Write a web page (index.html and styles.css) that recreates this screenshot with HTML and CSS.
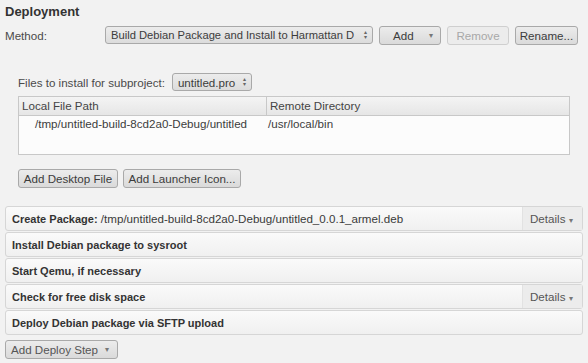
FILE: index.html
```html
<!DOCTYPE html>
<html lang="en">
<head>
    <meta charset="UTF-8">
    <title>Deployment</title>
    <link rel="stylesheet" href="styles.css">
</head>
<body>
    <div class="page">
        <h1 class="title">Deployment</h1>

        <div class="method-row">
            <span class="label">Method:</span>
            <div class="combo combo-method">
                <span class="combo-text">Build Debian Package and Install to Harmattan D</span>
                <span class="spin">&#x25B4;<br>&#x25BE;</span>
            </div>
            <div class="btn btn-menu btn-add">Add <span class="arrow">&#x25BE;</span></div>
            <div class="btn btn-disabled btn-remove">Remove</div>
            <div class="btn btn-rename">Rename...</div>
        </div>

        <div class="files">
            <div class="sub-row">
                <span class="label">Files to install for subproject:</span>
                <div class="combo combo-sub">
                    <span class="combo-text">untitled.pro</span>
                    <span class="spin">&#x25B4;<br>&#x25BE;</span>
                </div>
            </div>

            <div class="table">
                <div class="thead">
                    <div class="th th-local">Local File Path</div>
                    <div class="th th-remote">Remote Directory</div>
                </div>
                <div class="tr">
                    <div class="td td-local">/tmp/untitled-build-8cd2a0-Debug/untitled</div>
                    <div class="td td-remote">/usr/local/bin</div>
                </div>
            </div>

            <div class="file-buttons">
                <div class="btn">Add Desktop File</div>
                <div class="btn">Add Launcher Icon...</div>
            </div>
        </div>

        <ul class="steps">
            <li class="step">
                <span class="step-text"><b>Create Package:</b> /tmp/untitled-build-8cd2a0-Debug/untitled_0.0.1_armel.deb</span>
                <span class="details">Details <span class="arrow">&#x25BE;</span></span>
            </li>
            <li class="step">
                <span class="step-text"><b>Install Debian package to sysroot</b></span>
            </li>
            <li class="step">
                <span class="step-text"><b>Start Qemu, if necessary</b></span>
            </li>
            <li class="step">
                <span class="step-text"><b>Check for free disk space</b></span>
                <span class="details">Details <span class="arrow">&#x25BE;</span></span>
            </li>
            <li class="step">
                <span class="step-text"><b>Deploy Debian package via SFTP upload</b></span>
            </li>
        </ul>

        <div class="btn btn-menu btn-step">Add Deploy Step <span class="arrow">&#x25BE;</span></div>
    </div>
</body>
</html>
```

FILE: styles.css
```css
body {
    margin: 0;
    background-color: #f2f2f2;
    font-family: 'Liberation Sans', Arial, sans-serif;
    font-size: 11.6px;
    color: #3c3c3c;
}
.page {
    padding: 3px 5px 0 5px;
}
.title {
    font-size: 13px;
    font-weight: bold;
    margin: 0;
    height: 17px;
    line-height: 17px;
    color: #333;
}
.label {
    color: #4a4a4a;
}
.method-row {
    display: flex;
    align-items: center;
    margin-top: 6px;
    height: 18px;
}
.method-row .label {
    width: 100px;
}
.combo {
    display: flex;
    align-items: center;
    box-sizing: border-box;
    height: 18px;
    border: 1px solid #a9a9a9;
    border-radius: 3px;
    background: linear-gradient(#ececec, #dcdcdc);
    padding: 0 5px 0 5px;
    color: #3c3c3c;
}
.combo-method {
    width: 268px;
    font-size: 11.2px;
}
.combo-sub {
    width: 80px;
    margin-left: 7px;
}
.combo-text {
    flex: 1;
    white-space: nowrap;
}
.spin {
    font-size: 6px;
    line-height: 5px;
    color: #666;
    margin-left: 4px;
}
.btn {
    display: inline-flex;
    align-items: center;
    justify-content: center;
    box-sizing: border-box;
    height: 19px;
    padding: 0 6px;
    border: 1px solid #a9a9a9;
    border-radius: 3px;
    background: linear-gradient(#ececec, #dadada);
    color: #3c3c3c;
    white-space: nowrap;
}
.btn-menu {
    justify-content: space-between;
}
.arrow {
    font-size: 8px;
    color: #777;
}
.btn-add {
    width: 62px;
    margin-left: 6px;
    padding: 0 7px 0 13px;
}
.btn-remove {
    width: 62px;
    margin-left: 6px;
}
.btn-disabled {
    color: #a8a8a8;
    border-color: #cfcfcf;
    background: #ececec;
}
.btn-rename {
    width: 63px;
    margin-left: 6px;
}
.files {
    padding-left: 13px;
    width: 552px;
}
.sub-row {
    display: flex;
    align-items: center;
    margin-top: 29px;
    height: 18px;
}
.table {
    margin-top: 5px;
    height: 59px;
    box-sizing: border-box;
    border: 1px solid #c8c8c8;
    background-color: #fcfcfc;
}
.thead {
    display: flex;
    height: 18px;
    border-bottom: 1px solid #c8c8c8;
    background: linear-gradient(#f4f4f4, #e6e6e6);
}
.th {
    line-height: 18px;
    padding-left: 3px;
    color: #444;
}
.th-local {
    width: 244px;
    border-right: 1px solid #c8c8c8;
}
.tr {
    display: flex;
    height: 16px;
    line-height: 16px;
}
.td-local {
    width: 249px;
    padding-left: 16px;
    box-sizing: border-box;
    white-space: nowrap;
}
.file-buttons {
    display: flex;
    gap: 5px;
    margin-top: 14px;
}
.file-buttons .btn:first-child {
    width: 100px;
}
.file-buttons .btn:last-child {
    width: 118px;
}
.steps {
    list-style: none;
    margin: 18px 0 0 0;
    padding: 0;
    width: 578px;
}
.step {
    display: flex;
    justify-content: space-between;
    box-sizing: border-box;
    height: 25px;
    margin-bottom: 1px;
    border: 1px solid #d6d6d6;
    border-radius: 3px;
    background: linear-gradient(#fafafa, #f0f0f0);
}
.step-text {
    padding-left: 6px;
    line-height: 23px;
    color: #3a3a3a;
    white-space: nowrap;
}
.step-text b {
    font-size: 11px;
    color: #333;
}
.details {
    width: 60px;
    box-sizing: border-box;
    padding-left: 7px;
    line-height: 23px;
    border-left: 1px solid #e2e2e2;
    background-color: #ececec;
    color: #555;
}
.btn-step {
    width: 113px;
    margin-top: 4px;
    padding: 0 8px 0 5px;
    color: #555;
}
```
